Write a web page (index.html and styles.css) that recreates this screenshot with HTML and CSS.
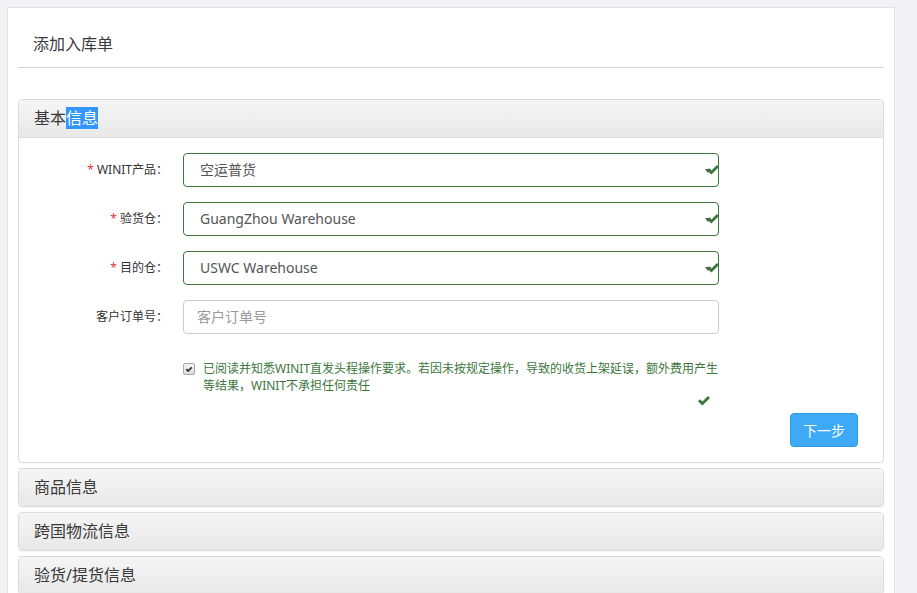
FILE: index.html
```html
<!DOCTYPE html>
<html lang="zh">
<head>
<meta charset="utf-8">
<title>添加入库单</title>
<link rel="stylesheet" href="styles.css">
</head>
<body>
<div class="card">
  <div class="page-title">添加入库单</div>

  <div class="panel">
    <div class="panel-heading">基本<span class="sel">信息</span></div>
    <div class="panel-body">
      <div class="form-row">
        <label class="lbl"><span class="req">*</span> WINIT产品：</label>
        <div class="field">
          <div class="control ok">空运普货<span class="caret"></span></div>
          <svg class="ok-icon" viewBox="0 0 12 10"><polygon points="0,5.2 2,3.2 4.4,5.6 10,0 12,2 4.4,9.6"/></svg>
        </div>
      </div>
      <div class="form-row">
        <label class="lbl"><span class="req">*</span> 验货仓：</label>
        <div class="field">
          <div class="control ok">GuangZhou Warehouse<span class="caret"></span></div>
          <svg class="ok-icon" viewBox="0 0 12 10"><polygon points="0,5.2 2,3.2 4.4,5.6 10,0 12,2 4.4,9.6"/></svg>
        </div>
      </div>
      <div class="form-row">
        <label class="lbl"><span class="req">*</span> 目的仓：</label>
        <div class="field">
          <div class="control ok">USWC Warehouse<span class="caret"></span></div>
          <svg class="ok-icon" viewBox="0 0 12 10"><polygon points="0,5.2 2,3.2 4.4,5.6 10,0 12,2 4.4,9.6"/></svg>
        </div>
      </div>
      <div class="form-row">
        <label class="lbl">客户订单号：</label>
        <div class="field">
          <div class="control placeholder">客户订单号</div>
        </div>
      </div>

      <div class="agree-row">
        <div class="agree">
          <span class="checkbox"><svg viewBox="0 0 12 10"><polygon points="1,5.4 2.8,3.6 4.6,5.4 9.2,0.8 11,2.6 4.6,9"/></svg></span>
          <span class="agree-text">已阅读并知悉WINIT直发头程操作要求。若因未按规定操作，导致的收货上架延误，额外费用产生等结果，WINIT不承担任何责任</span>
          <svg class="ok-icon agree-ok" viewBox="0 0 12 10"><polygon points="0,5.2 2,3.2 4.4,5.6 10,0 12,2 4.4,9.6"/></svg>
        </div>
      </div>

      <div class="actions">
        <button class="btn-primary" type="button">下一步</button>
      </div>
    </div>
  </div>

  <div class="panel collapsed">
    <div class="panel-heading">商品信息</div>
  </div>
  <div class="panel collapsed">
    <div class="panel-heading">跨国物流信息</div>
  </div>
  <div class="panel collapsed">
    <div class="panel-heading">验货/提货信息</div>
  </div>
</div>
</body>
</html>
```

FILE: styles.css
```css
* {
  box-sizing: border-box;
}

html, body {
  margin: 0;
  padding: 0;
  background: #f3f3f7;
  font-family: "Noto Sans", "Noto Sans CJK SC", sans-serif;
  color: #333;
}

.card {
  margin: 7px 0 0 7px;
  width: 888px;
  min-height: 600px;
  background: #fff;
  border: 1px solid #e4e4e8;
  padding: 0 10px 10px;
}

.page-title {
  font-size: 16px;
  line-height: 22px;
  padding: 25px 15px 12px;
  border-bottom: 1px solid #d2d2d2;
  color: #3a3a3a;
  margin-bottom: 31px;
}

.panel {
  border: 1px solid #dcdcdc;
  border-radius: 4px;
  margin-bottom: 5px;
  background: #fff;
  box-shadow: 0 1px 1px rgba(0, 0, 0, 0.04);
}

.panel-heading {
  height: 37px;
  line-height: 37px;
  padding: 0 15px;
  font-size: 16px;
  color: #3a3a3a;
  background: linear-gradient(#f5f5f5, #e8e8e8);
  border-radius: 3px 3px 0 0;
}

.collapsed .panel-heading {
  border-radius: 3px;
}

.sel {
  background: #3296fa;
  color: #fff;
}

.panel-body {
  border-top: 1px solid #dcdcdc;
  padding: 15px 0 15px;
}

.form-row {
  display: flex;
  align-items: center;
  margin-bottom: 15px;
  height: 34px;
}

.lbl {
  width: 149px;
  text-align: right;
  font-size: 12px;
  color: #333;
  margin-right: 15px;
  line-height: 34px;
}

.req {
  color: #e3393c;
}

.field {
  position: relative;
  width: 536px;
}

.control {
  height: 34px;
  border: 1px solid #ccc;
  border-radius: 4px;
  padding: 0 16px;
  font-size: 14px;
  line-height: 32px;
  color: #555;
  position: relative;
}

.control.ok {
  border-color: #3c763d;
}

.control.placeholder {
  color: #999;
  padding-left: 13px;
}

.caret {
  position: absolute;
  right: 7px;
  top: 15px;
  width: 0;
  height: 0;
  border-left: 3px solid transparent;
  border-right: 3px solid transparent;
  border-top: 4px solid #555;
}

.ok-icon {
  position: absolute;
  right: 0;
  top: 12px;
  width: 12px;
  height: 10px;
  fill: #3c763d;
}

.agree-row {
  padding-left: 164px;
  margin-top: 26px;
}

.agree {
  position: relative;
  display: flex;
  align-items: flex-start;
  width: 536px;
  height: 60px;
}

.checkbox {
  flex: none;
  width: 12px;
  height: 12px;
  margin-top: 3px;
  margin-right: 8px;
  border: 1px solid #a8a8a8;
  border-radius: 2px;
  background: linear-gradient(#f4f4f4, #dcdcdc);
  display: flex;
  align-items: center;
  justify-content: center;
}

.checkbox svg {
  width: 8px;
  height: 7px;
  fill: #333;
}

.agree-text {
  width: 518px;
  font-size: 12px;
  line-height: 17px;
  color: #3c763d;
}

.agree-ok {
  right: 9px;
  top: 36px;
}

.actions {
  display: flex;
  justify-content: flex-end;
  padding-right: 25px;
  margin-top: -7px;
}

.btn-primary {
  width: 68px;
  height: 34px;
  border: 1px solid #2f9ae8;
  border-radius: 4px;
  background: #3da9f7;
  color: #fff;
  font-family: "Noto Sans CJK SC", sans-serif;
  font-size: 14px;
  padding: 0;
}
```
